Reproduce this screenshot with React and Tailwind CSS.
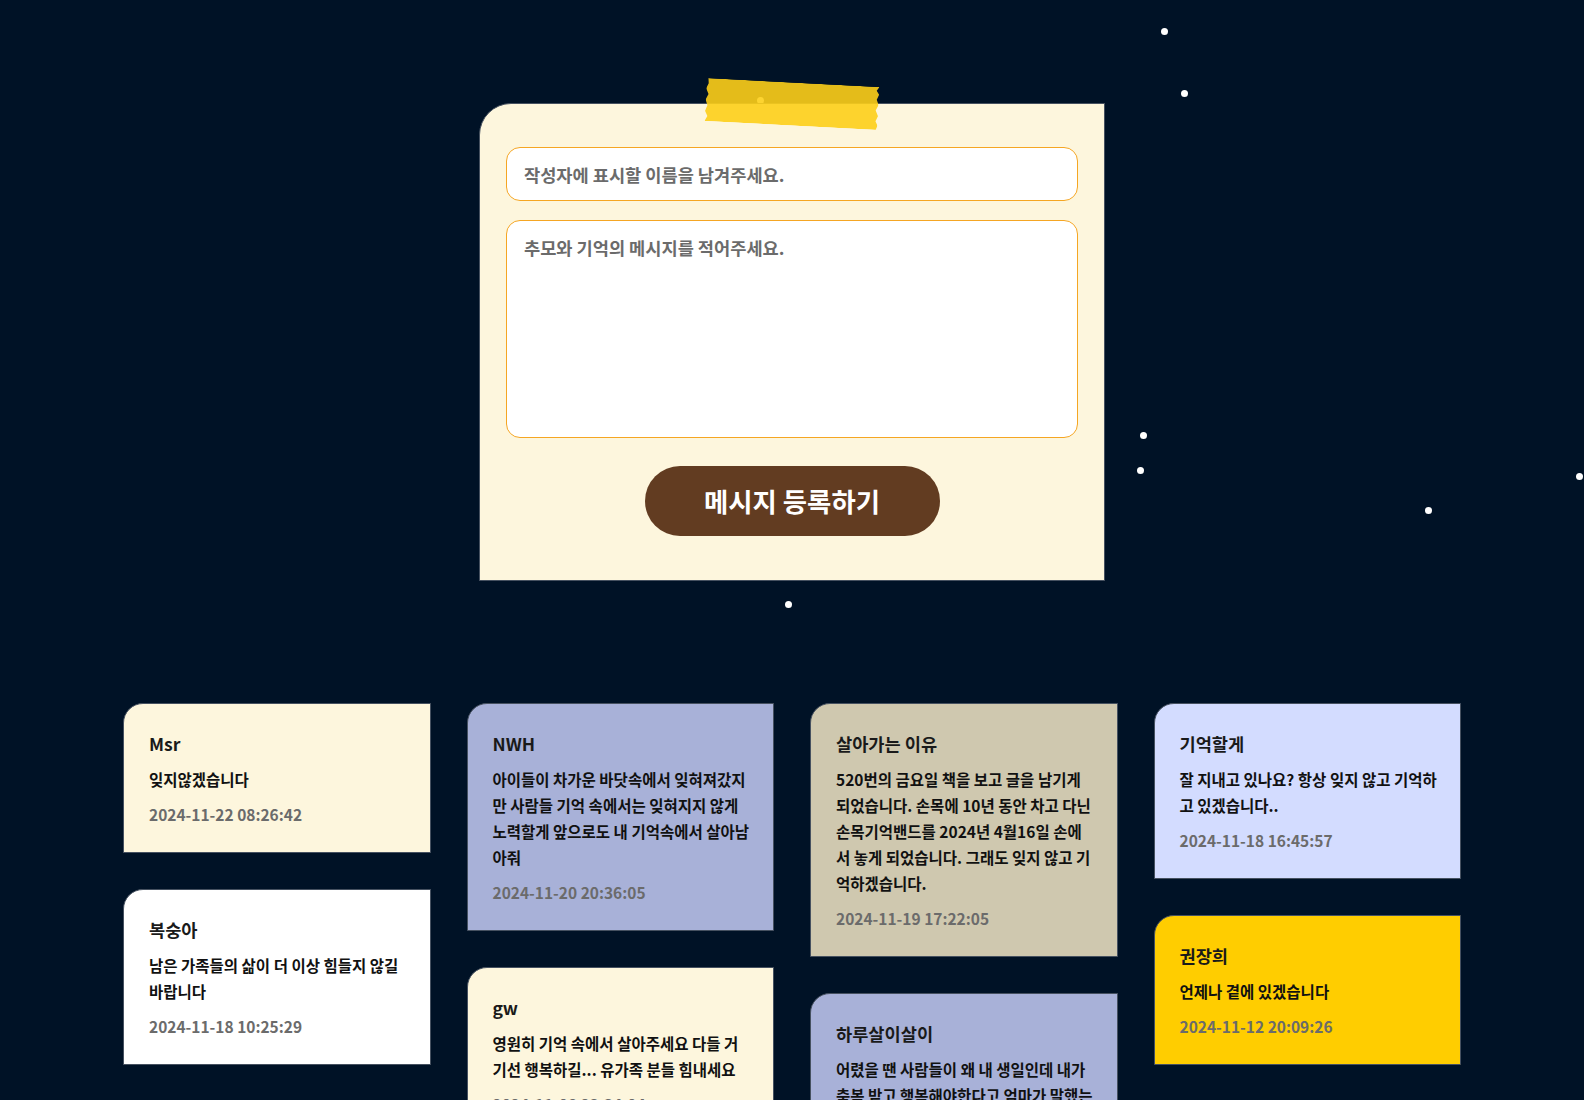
import React from "react";

const stars = [
  { x: 1164, y: 31 },
  { x: 1184, y: 93 },
  { x: 1143, y: 435 },
  { x: 1140, y: 470 },
  { x: 1579, y: 476 },
  { x: 1428, y: 510 },
  { x: 788, y: 604 },
  { x: 760, y: 100 },
];

const columns = [
  [
    { name: "Msr", lines: ["잊지않겠습니다"], date: "2024-11-22 08:26:42", bg: "bg-[#fdf6dd]" },
    { name: "복숭아", lines: ["남은 가족들의 삶이 더 이상 힘들지 않길", "바랍니다"], date: "2024-11-18 10:25:29", bg: "bg-white" },
    { name: "기억", lines: ["잊지 않겠습니다"], date: "2024-11-08 12:10:41", bg: "bg-[#a8b1d8]" },
  ],
  [
    {
      name: "NWH",
      lines: ["아이들이 차가운 바닷속에서 잊혀져갔지", "만 사람들 기억 속에서는 잊혀지지 않게", "노력할게 앞으로도 내 기억속에서 살아남", "아줘"],
      date: "2024-11-20 20:36:05",
      bg: "bg-[#a8b1d8]",
    },
    {
      name: "gw",
      lines: ["영원히 기억 속에서 살아주세요 다들 거", "기선 행복하길... 유가족 분들 힘내세요"],
      date: "2024-11-08 23:34:04",
      bg: "bg-[#fdf6dd]",
    },
  ],
  [
    {
      name: "살아가는 이유",
      lines: [
        "520번의 금요일 책을 보고 글을 남기게",
        "되었습니다. 손목에 10년 동안 차고 다닌",
        "손목기억밴드를 2024년 4월16일 손에",
        "서 놓게 되었습니다. 그래도 잊지 않고 기",
        "억하겠습니다.",
      ],
      date: "2024-11-19 17:22:05",
      bg: "bg-[#cfc8af]",
    },
    {
      name: "하루살이살이",
      lines: ["어렸을 땐 사람들이 왜 내 생일인데 내가", "축복 받고 행복해야한다고 엄마가 말했는", "지 몰랐는데 이제는 조금 알 것 같아요."],
      date: "2024-11-10 01:12:33",
      bg: "bg-[#a8b1d8]",
    },
  ],
  [
    {
      name: "기억할게",
      lines: ["잘 지내고 있나요? 항상 잊지 않고 기억하", "고 있겠습니다.."],
      date: "2024-11-18 16:45:57",
      bg: "bg-[#d3dcff]",
    },
    { name: "권장희", lines: ["언제나 곁에 있겠습니다"], date: "2024-11-12 20:09:26", bg: "bg-[#ffcd00]" },
    { name: "별", lines: ["보고 싶습니다"], date: "2024-11-05 09:41:12", bg: "bg-white" },
  ],
];

function Note({ n }) {
  return (
    <div className={`${n.bg} rounded-tl-[20px] border border-[#465160] pl-[25px] pr-[15px] pt-[28px] pb-[26px] flex flex-col gap-[10px]`}>
      <div className="text-[17.6px] leading-[24px] font-semibold text-[#1a1a1a]">{n.name}</div>
      <div className="text-[15.5px] leading-[26px] font-semibold text-[#111]">
        {n.lines.map((l, i) => (
          <div key={i} className="whitespace-nowrap">
            {l}
          </div>
        ))}
      </div>
      <div className="text-[15.5px] leading-[24px] font-semibold text-[#6b6b6b]">{n.date}</div>
    </div>
  );
}

export default function App() {
  return (
    <div className="relative min-h-[1100px] bg-[#001226] overflow-hidden font-['Noto_Sans_CJK_KR','Noto_Sans',sans-serif]">
      {stars.map((s, i) => (
        <div
          key={i}
          className="absolute size-[7px] rounded-full bg-white"
          style={{ left: s.x - 3.5, top: s.y - 3.5 }}
        />
      ))}
      <div className="relative pt-[103px] pb-[80px]">
        <div className="relative mx-auto w-[626px] bg-[#fdf6dd] rounded-tl-[32px] border border-[#465160] px-[26px] pt-[43px] pb-[44px] flex flex-col">
          <div className="absolute left-1/2 top-0 -translate-x-1/2 -translate-y-1/2 rotate-[3deg] w-[173px] h-[43px] bg-[#fdcf19]/90 [clip-path:polygon(1%_0,100%_0,98.5%_9%,100%_18%,98.8%_30%,100%_42%,98.5%_55%,100%_68%,98.7%_80%,100%_90%,99%_100%,0_100%,1.5%_88%,0_76%,1.2%_63%,0_50%,1.5%_37%,0_24%,1.3%_12%)]" />
          <input
            className="h-[54px] w-full rounded-[14px] border border-[#f5a623] bg-white px-[17px] text-[17.6px] font-semibold text-[#333] placeholder:text-[#6b6b6b] outline-none"
            placeholder="작성자에 표시할 이름을 남겨주세요."
          />
          <textarea
            className="mt-[19px] h-[218px] w-full resize-none rounded-[14px] border border-[#f5a623] bg-white px-[17px] pt-[14px] text-[17.6px] leading-[26px] font-semibold text-[#333] placeholder:text-[#6b6b6b] outline-none"
            placeholder="추모와 기억의 메시지를 적어주세요."
          />
          <button className="mx-auto mt-[28px] h-[70px] w-[295px] rounded-full bg-[#623c21] text-[26.4px] font-bold text-white">
            메시지 등록하기
          </button>
        </div>

        <div className="mx-auto mt-[122px] grid w-[1338px] grid-cols-4 gap-x-[36px] items-start">
          {columns.map((col, ci) => (
            <div key={ci} className="flex flex-col gap-[36px]">
              {col.map((n, i) => (
                <Note key={i} n={n} />
              ))}
            </div>
          ))}
        </div>
      </div>
    </div>
  );
}
